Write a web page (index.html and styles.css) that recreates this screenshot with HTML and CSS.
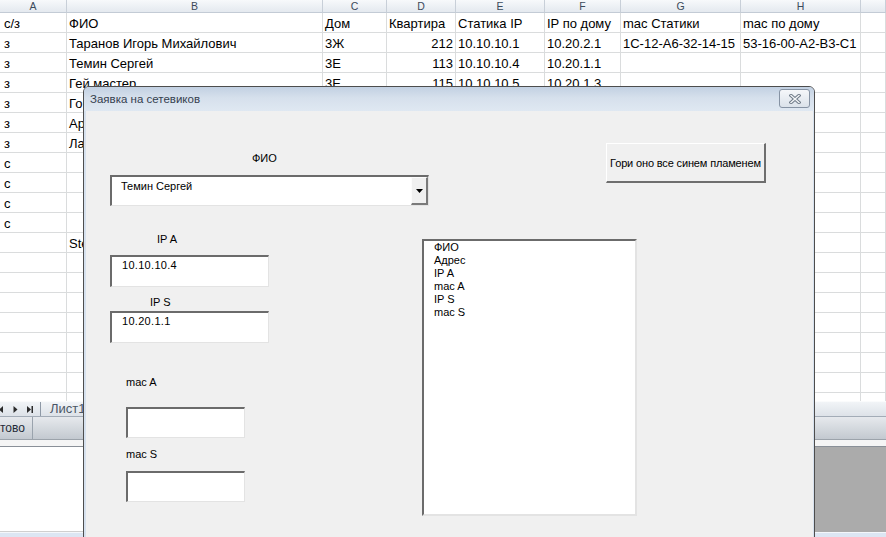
FILE: index.html
```html
<!DOCTYPE html>
<html lang="ru">
<head>
<meta charset="utf-8">
<title>Заявка на сетевиков</title>
<link rel="stylesheet" href="styles.css">
</head>
<body>
<div class="screen">
  <div class="sheet">
    <div class="grid">
      <div class="hd">A</div><div class="hd">B</div><div class="hd">C</div><div class="hd">D</div><div class="hd">E</div><div class="hd">F</div><div class="hd">G</div><div class="hd">H</div><div class="hd"></div>

      <div class="c first">с/з</div><div class="c">ФИО</div><div class="c">Дом</div><div class="c">Квартира</div><div class="c">Статика IP</div><div class="c">IP по дому</div><div class="c">mac Статики</div><div class="c">mac по дому</div><div class="c"></div>
      <div class="c first">з</div><div class="c">Таранов Игорь Михайлович</div><div class="c">3Ж</div><div class="c num">212</div><div class="c">10.10.10.1</div><div class="c">10.20.2.1</div><div class="c">1C-12-A6-32-14-15</div><div class="c">53-16-00-A2-B3-C1</div><div class="c"></div>
      <div class="c first">з</div><div class="c">Темин Сергей</div><div class="c">3Е</div><div class="c num">113</div><div class="c">10.10.10.4</div><div class="c">10.20.1.1</div><div class="c"></div><div class="c"></div><div class="c"></div>
      <div class="c first">з</div><div class="c">Гей мастер</div><div class="c">3Е</div><div class="c num">115</div><div class="c">10.10.10.5</div><div class="c">10.20.1.3</div><div class="c"></div><div class="c"></div><div class="c"></div>
      <div class="c first">з</div><div class="c">Го</div><div class="c"></div><div class="c"></div><div class="c"></div><div class="c"></div><div class="c"></div><div class="c"></div><div class="c"></div>
      <div class="c first">з</div><div class="c">Ар</div><div class="c"></div><div class="c"></div><div class="c"></div><div class="c"></div><div class="c"></div><div class="c"></div><div class="c"></div>
      <div class="c first">з</div><div class="c">Ла</div><div class="c"></div><div class="c"></div><div class="c"></div><div class="c"></div><div class="c"></div><div class="c"></div><div class="c"></div>
      <div class="c first">с</div><div class="c"></div><div class="c"></div><div class="c"></div><div class="c"></div><div class="c"></div><div class="c"></div><div class="c"></div><div class="c"></div>
      <div class="c first">с</div><div class="c"></div><div class="c"></div><div class="c"></div><div class="c"></div><div class="c"></div><div class="c"></div><div class="c"></div><div class="c"></div>
      <div class="c first">с</div><div class="c"></div><div class="c"></div><div class="c"></div><div class="c"></div><div class="c"></div><div class="c"></div><div class="c"></div><div class="c"></div>
      <div class="c first">с</div><div class="c"></div><div class="c"></div><div class="c"></div><div class="c"></div><div class="c"></div><div class="c"></div><div class="c"></div><div class="c"></div>
      <div class="c first"></div><div class="c">Ste</div><div class="c"></div><div class="c"></div><div class="c"></div><div class="c"></div><div class="c"></div><div class="c"></div><div class="c"></div>
      <div class="c first"></div><div class="c"></div><div class="c"></div><div class="c"></div><div class="c"></div><div class="c"></div><div class="c"></div><div class="c"></div><div class="c"></div>
      <div class="c first"></div><div class="c"></div><div class="c"></div><div class="c"></div><div class="c"></div><div class="c"></div><div class="c"></div><div class="c"></div><div class="c"></div>
      <div class="c first"></div><div class="c"></div><div class="c"></div><div class="c"></div><div class="c"></div><div class="c"></div><div class="c"></div><div class="c"></div><div class="c"></div>
      <div class="c first"></div><div class="c"></div><div class="c"></div><div class="c"></div><div class="c"></div><div class="c"></div><div class="c"></div><div class="c"></div><div class="c"></div>
      <div class="c first"></div><div class="c"></div><div class="c"></div><div class="c"></div><div class="c"></div><div class="c"></div><div class="c"></div><div class="c"></div><div class="c"></div>
      <div class="c first"></div><div class="c"></div><div class="c"></div><div class="c"></div><div class="c"></div><div class="c"></div><div class="c"></div><div class="c"></div><div class="c"></div>
      <div class="c first"></div><div class="c"></div><div class="c"></div><div class="c"></div><div class="c"></div><div class="c"></div><div class="c"></div><div class="c"></div><div class="c"></div>
      <div class="c first"></div><div class="c"></div><div class="c"></div><div class="c"></div><div class="c"></div><div class="c"></div><div class="c"></div><div class="c"></div><div class="c"></div>
    </div>

    <div class="tabbar">
      <svg class="nav" width="37" height="15" viewBox="0 0 37 15">
        <polygon points="3,4 -1,7.5 3,11" fill="#2b2b2b"/>
        <polygon points="13.5,4 17.5,7.5 13.5,11" fill="#2b2b2b"/>
        <polygon points="27,4 31,7.5 27,11" fill="#2b2b2b"/>
        <rect x="31.5" y="4" width="1.5" height="7" fill="#2b2b2b"/>
      </svg>
      <div class="tab">Лист1</div>
    </div>
    <div class="status">
      <div class="ready">тово</div>
    </div>
    <div class="strip"></div>
    <div class="lower">
      <div class="lower-left"></div>
      <div class="lower-right"></div>
    </div>
    <div class="bottom"></div>
  </div>

  <div class="dialog">
    <div class="titlebar">
      <span class="title">Заявка на сетевиков</span>
      <div class="close">
        <svg width="12" height="10" viewBox="0 0 12 10">
          <path d="M2 1.5 L10 8.5 M10 1.5 L2 8.5" stroke="#6e7a88" stroke-width="3.4" stroke-linecap="square" fill="none"/>
          <path d="M2 1.5 L10 8.5 M10 1.5 L2 8.5" stroke="#f4f6f8" stroke-width="1.4" stroke-linecap="square" fill="none"/>
        </svg>
      </div>
    </div>
    <div class="dlg-body">
      <div class="left">
        <div class="lbl lbl-fio">ФИО</div>
        <div class="combo">
          <div class="val">Темин Сергей</div>
          <div class="arrow">
            <svg width="7" height="4" viewBox="0 0 7 4"><polygon points="0,0 7,0 3.5,4" fill="#000"/></svg>
          </div>
        </div>
        <div class="lbl lbl-ipa">IP A</div>
        <div class="field ip ipa-box">10.10.10.4</div>
        <div class="lbl lbl-ips">IP S</div>
        <div class="field ip ips-box">10.20.1.1</div>
        <div class="lbl lbl-maca">mac A</div>
        <div class="field small maca-box"></div>
        <div class="lbl lbl-macs">mac S</div>
        <div class="field small macs-box"></div>
      </div>
      <div class="right">
        <div class="btn">Гори оно все синем пламенем</div>
        <div class="list">
          <div>ФИО</div>
          <div>Адрес</div>
          <div>IP A</div>
          <div>mac A</div>
          <div>IP S</div>
          <div>mac S</div>
        </div>
      </div>
    </div>
  </div>
</div>
</body>
</html>
```
FILE: styles.css
```css
* { box-sizing: border-box; }

body {
  margin: 0;
  background: #fff;
  font-family: "Liberation Sans", Arial, sans-serif;
}

.screen {
  position: relative;
  width: 886px;
  height: 537px;
  overflow: hidden;
}

.sheet {
  display: flex;
  flex-direction: column;
  height: 537px;
}

/* ---------- spreadsheet grid ---------- */
.grid {
  flex: none;
  height: 401px;
  overflow: hidden;
  display: grid;
  grid-template-columns: 67px 256px 64px 69px 89px 76px 120px 120px 25px;
  grid-template-rows: 13px;
  grid-auto-rows: 20px;
  font-size: 13px;
  color: #000;
}

.hd {
  background: linear-gradient(#f7f9fb, #e4e9ef);
  border-right: 1px solid #c8cfd8;
  border-bottom: 1px solid #c3cbd5;
  text-align: center;
  font-size: 10.5px;
  line-height: 12px;
  color: #3b4a5b;
}

.c {
  border-right: 1px solid #dadcdd;
  border-bottom: 1px solid #dadcdd;
  padding: 0 2px;
  line-height: 21px;
  white-space: nowrap;
  overflow: hidden;
}

.c.first { padding-left: 4px; }
.c.num { text-align: right; padding-right: 2px; }

/* ---------- sheet tabs / status ---------- */
.tabbar {
  flex: none;
  height: 16px;
  display: flex;
  align-items: stretch;
  background: linear-gradient(#f1f4f7, #dde2e8);
  border-top: 1px solid #fafbfc;
  border-bottom: 1px solid #a3acb7;
}

.nav { flex: none; display: block; margin-right: 3px; }

.tab {
  border-left: 1px solid #8e99a6;
  padding-left: 9px;
  font-size: 13px;
  line-height: 14px;
  color: #4a5666;
}

.status {
  flex: none;
  height: 23px;
  display: flex;
  background: linear-gradient(#e6e9ed, #c3c9d0);
  border-bottom: 1px solid #9ca3ab;
  font-size: 12px;
  color: #1f2a37;
}

.ready {
  width: 33px;
  border-right: 1px solid #9aa3ad;
  display: flex;
  align-items: center;
}

.strip {
  flex: none;
  height: 7px;
  background: #f5f5f5;
  border-bottom: 1px solid #8a9098;
}

.lower {
  flex: none;
  height: 85px;
  display: flex;
}

.lower-left {
  width: 420px;
  background: #fff;
  border-bottom: 1px solid #cfcfcf;
}

.lower-right {
  flex: 1;
  background: #ababab;
}

.bottom {
  flex: none;
  height: 5px;
  background: #dce6f3;
  border-top: 1px solid #f4f7fb;
}

/* ---------- dialog (UserForm) ---------- */
.dialog {
  position: absolute;
  left: 83px;
  top: 86px;
  width: 732px;
  height: 460px;
  border: 1px solid #4d4d4d;
  border-radius: 6px 6px 0 0;
  background: #d6e1ee;
  display: flex;
  flex-direction: column;
  font-family: "Liberation Sans", Arial, sans-serif;
  font-size: 11px;
  color: #000;
}

.titlebar {
  flex: none;
  height: 24px;
  display: flex;
  justify-content: space-between;
  align-items: flex-start;
  padding: 0 4px 0 6px;
  border-radius: 5px 5px 0 0;
  background: linear-gradient(#c2d0e2, #d6e0ec 45%, #dfe8f2);
}

.title {
  font-size: 11.5px;
  line-height: 24px;
  color: #34404f;
}

.close {
  margin-top: 2px;
  width: 31px;
  height: 19px;
  border: 1px solid #8693a4;
  border-radius: 3px;
  background: linear-gradient(#f5f7fa, #dbe2ea);
  display: flex;
  align-items: center;
  justify-content: center;
}

.dlg-body {
  flex: 1;
  margin: 0 1px 0 2px;
  background: #f0f0f0;
  display: flex;
  padding-left: 24px;
}

.left {
  flex: none;
  width: 312px;
  display: flex;
  flex-direction: column;
  align-items: flex-start;
}

.lbl {
  height: 13px;
  line-height: 13px;
  white-space: nowrap;
}

.lbl-fio { margin-top: 41px; padding-left: 142px; }

.combo {
  margin-top: 10px;
  width: 319px;
  height: 31px;
  flex: none;
  display: flex;
  background: #fff;
  border-style: solid;
  border-width: 2px 1px 1px 2px;
  border-color: #6b6b6b #e3e3e3 #e3e3e3 #6b6b6b;
}

.combo .val {
  flex: 1;
  padding: 3px 0 0 9px;
  line-height: 13px;
}

.combo .arrow {
  flex: none;
  width: 17px;
  background: #f0f0f0;
  border-style: solid;
  border-width: 1px 2px 2px 1px;
  border-color: #fcfcfc #7a7a7a #7a7a7a #fcfcfc;
  display: flex;
  align-items: center;
  justify-content: center;
}

.arrow svg { display: block; }

.field {
  flex: none;
  width: 159px;
  height: 32px;
  background: #fff;
  border-style: solid;
  border-width: 2px 1px 1px 2px;
  border-color: #6b6b6b #e3e3e3 #e3e3e3 #6b6b6b;
  padding: 2px 0 0 10px;
  line-height: 13px;
}

.field.ip { letter-spacing: 0.3px; }

.field.small {
  width: 119px;
  height: 31px;
  margin-left: 16px;
}

.lbl-ipa { margin-top: 27px; padding-left: 47px; }
.ipa-box { margin-top: 9px; }
.lbl-ips { margin-top: 9px; padding-left: 40px; }
.ips-box { margin-top: 2px; }
.lbl-maca { margin-top: 33px; padding-left: 16px; }
.maca-box { margin-top: 18px; }
.lbl-macs { margin-top: 10px; padding-left: 16px; }
.macs-box { margin-top: 10px; }

.right {
  flex: none;
  display: flex;
  flex-direction: column;
  align-items: flex-start;
}

.btn {
  margin-top: 32px;
  margin-left: 184px;
  width: 160px;
  height: 40px;
  background: #f0f0f0;
  border-style: solid;
  border-width: 1px 2px 2px 1px;
  border-color: #fff #6e6e6e #6e6e6e #fff;
  display: flex;
  align-items: center;
  justify-content: center;
  white-space: nowrap;
  letter-spacing: -0.15px;
}

.list {
  margin-top: 56px;
  width: 215px;
  height: 277px;
  background: #fff;
  border-style: solid;
  border-width: 2px 2px 2px 2px;
  border-color: #6b6b6b #e3e3e3 #e3e3e3 #6b6b6b;
  padding: 0 0 0 10px;
  line-height: 13px;
}
```
